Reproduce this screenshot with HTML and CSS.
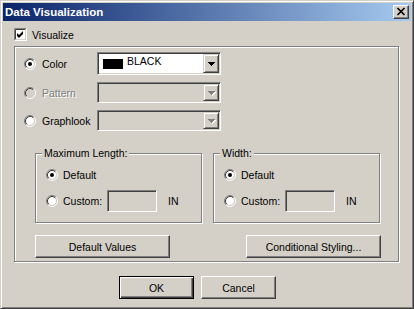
FILE: index.html
```html
<!DOCTYPE html>
<html lang="en">
<head>
    <meta charset="UTF-8">
    <title>Data Visualization</title>
    <link rel="stylesheet" href="styles.css">
</head>
<body>
    <!-- shared shapes -->
    <svg class="defs" width="0" height="0">
        <symbol id="radio-ring" viewBox="0 0 12 12">
            <path d="M2.11 9.89A5.5 5.5 0 0 1 9.89 2.11" fill="none" stroke="#808080"/>
            <path d="M9.89 2.11A5.5 5.5 0 0 1 2.11 9.89" fill="none" stroke="#fff"/>
            <path d="M2.82 9.18A4.5 4.5 0 0 1 9.18 2.82" fill="none" stroke="#404040"/>
            <path d="M9.18 2.82A4.5 4.5 0 0 1 2.82 9.18" fill="none" stroke="#d4d0c8"/>
        </symbol>
        <symbol id="arrow" viewBox="0 0 7 4">
            <path d="M0 0h7v1H0zM1 1h5v1H1zM2 2h3v1H2zM3 3h1v1H3z"/>
        </symbol>
    </svg>

    <div class="dialog">
        <div class="titlebar">
            <span class="title">Data Visualization</span>
            <span class="close-btn">
                <svg width="10" height="9" viewBox="0 0 10 9">
                    <path d="M1.5 1L8.5 8M8.5 1L1.5 8" stroke="#000" stroke-width="1.7"/>
                </svg>
            </span>
        </div>

        <div class="content">
            <div class="check-row">
                <svg class="checkbox" width="13" height="13" viewBox="0 0 13 13">
                    <rect width="13" height="13" fill="#fff"/>
                    <path d="M0.5 12.5V0.5H12.5" fill="none" stroke="#808080"/>
                    <path d="M1.5 11.5V1.5H11.5" fill="none" stroke="#404040"/>
                    <path d="M0.5 12.5H12.5V0.5" fill="none" stroke="#fff"/>
                    <path d="M1.5 11.5H11.5V1.5" fill="none" stroke="#d4d0c8"/>
                    <path d="M3 5L5 7L9 3V6L5 10L3 8Z" fill="#000"/>
                </svg>
                <span>Visualize</span>
            </div>

            <div class="group main-group">
                <div class="opt-row color-row">
                    <span class="radio-label">
                        <svg class="radio" width="12" height="12" viewBox="0 0 12 12">
                            <circle cx="6" cy="6" r="4" fill="#fff"/>
                            <use href="#radio-ring"/>
                            <circle cx="6" cy="6" r="2" fill="#000"/>
                        </svg>
                        Color
                    </span>
                    <div class="combo">
                        <span class="combo-value"><span class="swatch"></span><span class="value-text">BLACK</span></span>
                        <span class="combo-btn"><svg width="7" height="4"><use href="#arrow"/></svg></span>
                    </div>
                </div>

                <div class="opt-row">
                    <span class="radio-label disabled">
                        <svg class="radio" width="12" height="12" viewBox="0 0 12 12">
                            <circle cx="6" cy="6" r="4" fill="#d4d0c8"/>
                            <use href="#radio-ring"/>
                        </svg>
                        Pattern
                    </span>
                    <div class="combo combo-disabled">
                        <span class="combo-value"></span>
                        <span class="combo-btn"><svg class="arrow-off" width="8" height="5" viewBox="0 0 8 5"><use href="#arrow" x="1" y="1" width="7" height="4" fill="#fff"/><use href="#arrow" width="7" height="4" fill="#808080"/></svg></span>
                    </div>
                </div>

                <div class="opt-row">
                    <span class="radio-label">
                        <svg class="radio" width="12" height="12" viewBox="0 0 12 12">
                            <circle cx="6" cy="6" r="4" fill="#fff"/>
                            <use href="#radio-ring"/>
                        </svg>
                        Graphlook
                    </span>
                    <div class="combo combo-disabled">
                        <span class="combo-value"></span>
                        <span class="combo-btn"><svg class="arrow-off" width="8" height="5" viewBox="0 0 8 5"><use href="#arrow" x="1" y="1" width="7" height="4" fill="#fff"/><use href="#arrow" width="7" height="4" fill="#808080"/></svg></span>
                    </div>
                </div>

                <div class="sub-groups">
                    <div class="group sub-group">
                        <span class="legend">Maximum Length:</span>
                        <div class="sub-row">
                            <svg class="radio" width="12" height="12" viewBox="0 0 12 12">
                                <circle cx="6" cy="6" r="4" fill="#fff"/>
                                <use href="#radio-ring"/>
                                <circle cx="6" cy="6" r="2" fill="#000"/>
                            </svg>
                            <span class="sub-label">Default</span>
                        </div>
                        <div class="sub-row">
                            <svg class="radio" width="12" height="12" viewBox="0 0 12 12">
                                <circle cx="6" cy="6" r="4" fill="#fff"/>
                                <use href="#radio-ring"/>
                            </svg>
                            <span class="sub-label">Custom:</span>
                            <span class="field"></span>
                            <span class="unit">IN</span>
                        </div>
                    </div>

                    <div class="group sub-group">
                        <span class="legend">Width:</span>
                        <div class="sub-row">
                            <svg class="radio" width="12" height="12" viewBox="0 0 12 12">
                                <circle cx="6" cy="6" r="4" fill="#fff"/>
                                <use href="#radio-ring"/>
                                <circle cx="6" cy="6" r="2" fill="#000"/>
                            </svg>
                            <span class="sub-label">Default</span>
                        </div>
                        <div class="sub-row">
                            <svg class="radio" width="12" height="12" viewBox="0 0 12 12">
                                <circle cx="6" cy="6" r="4" fill="#fff"/>
                                <use href="#radio-ring"/>
                            </svg>
                            <span class="sub-label">Custom:</span>
                            <span class="field"></span>
                            <span class="unit">IN</span>
                        </div>
                    </div>
                </div>

                <div class="action-row">
                    <button class="btn wide-btn">Default Values</button>
                    <button class="btn wide-btn">Conditional Styling...</button>
                </div>
            </div>

            <div class="footer-row">
                <button class="btn dialog-btn default-btn">OK</button>
                <button class="btn dialog-btn">Cancel</button>
            </div>
        </div>
    </div>
</body>
</html>
```

FILE: styles.css
```css
body {
    margin: 0;
    background-color: #d4d0c8;
    font-family: "Liberation Sans", Arial, sans-serif;
    font-size: 10.5px;
    color: #000;
}

.defs {
    position: absolute;
    width: 0;
    height: 0;
}

.dialog {
    width: 414px;
    height: 309px;
    box-sizing: border-box;
    border: 1px solid;
    border-color: #d4d0c8 #404040 #404040 #d4d0c8;
    box-shadow: inset 1px 1px #fff, inset -1px -1px #808080;
    padding: 2px;
}

/* Title bar */
.titlebar {
    height: 18px;
    display: flex;
    align-items: center;
    justify-content: space-between;
    padding: 0 2px 0 2px;
    background: linear-gradient(to right, #0a246a, #a6caf0);
}

.title {
    color: #fff;
    font-weight: bold;
    font-size: 11.5px;
}

.close-btn {
    width: 16px;
    height: 14px;
    box-sizing: border-box;
    border: 1px solid;
    border-color: #fff #404040 #404040 #fff;
    box-shadow: inset -1px -1px #808080;
    background-color: #d4d0c8;
    display: flex;
    align-items: center;
    justify-content: center;
}

.close-btn svg {
    display: block;
    margin: 0 1px 1px 0;
}

.content {
    padding: 0 11px;
}

.check-row {
    display: flex;
    align-items: center;
    gap: 5px;
    height: 13px;
    margin-top: 7px;
}

.checkbox, .radio {
    display: block;
    flex: none;
}

/* Etched group boxes */
.group {
    border: 1px solid #808080;
    box-shadow: inset 1px 1px #fff, 1px 1px #fff;
}

.main-group {
    width: 385px;
    height: 216px;
    box-sizing: border-box;
    margin-top: 5px;
    padding-top: 5px;
}

.opt-row {
    display: flex;
    align-items: center;
    height: 21px;
    padding-left: 9px;
    margin-top: 7px;
}

.opt-row.color-row {
    height: 23px;
    margin-top: 0;
}

.radio-label {
    width: 73px;
    display: flex;
    align-items: center;
    gap: 6px;
}

.disabled {
    color: #808080;
    text-shadow: 1px 1px #fff;
}

/* Combo boxes */
.combo {
    width: 124px;
    height: 100%;
    box-sizing: border-box;
    border: 1px solid;
    border-color: #808080 #fff #fff #808080;
    box-shadow: inset 1px 1px #404040, inset -1px -1px #d4d0c8;
    background-color: #fff;
    padding: 1px;
    display: flex;
}

.combo-disabled {
    background-color: #d4d0c8;
}

.combo-value {
    flex: 1;
    display: flex;
    gap: 4px;
    padding-left: 4px;
}

.swatch {
    width: 20px;
    height: 10px;
    margin-top: 5px;
    background-color: #000;
}

.value-text {
    line-height: 13px;
    margin-top: 1px;
}

.combo-btn {
    width: 16px;
    box-sizing: border-box;
    border: 1px solid;
    border-color: #d4d0c8 #404040 #404040 #d4d0c8;
    box-shadow: inset 1px 1px #fff, inset -1px -1px #808080;
    background-color: #d4d0c8;
    display: flex;
    align-items: center;
    justify-content: center;
}

.combo-btn svg {
    display: block;
}

.arrow-off {
    margin: 1px 0 0 1px;
}

/* Length / width boxes */
.sub-groups {
    display: flex;
    gap: 11px;
    margin: 22px 0 0 20px;
}

.sub-group {
    position: relative;
    width: 167px;
    height: 70px;
    box-sizing: border-box;
    padding: 10px 0 0 10px;
}

.legend {
    position: absolute;
    top: -7px;
    left: 6px;
    padding: 0 2px;
    line-height: 13px;
    background-color: #d4d0c8;
}

.sub-row {
    display: flex;
    align-items: center;
    height: 22px;
}

.sub-row + .sub-row {
    margin-top: 4px;
}

.sub-label {
    width: 44px;
    margin-left: 5px;
}

.field {
    width: 50px;
    height: 22px;
    box-sizing: border-box;
    border: 1px solid;
    border-color: #808080 #fff #fff #808080;
    box-shadow: inset 1px 1px #404040, inset -1px -1px #d4d0c8;
}

.unit {
    margin-left: 11px;
}

/* Buttons */
.btn {
    font: inherit;
    color: #000;
    height: 23px;
    padding: 0;
    box-sizing: border-box;
    background-color: #d4d0c8;
    border: 1px solid;
    border-color: #fff #404040 #404040 #fff;
    box-shadow: inset -1px -1px #808080;
}

.action-row {
    display: flex;
    justify-content: space-between;
    width: 346px;
    margin: 12px 0 0 20px;
}

.wide-btn {
    width: 135px;
}

.footer-row {
    display: flex;
    gap: 7px;
    margin-top: 14px;
    padding-left: 105px;
}

.dialog-btn {
    width: 75px;
}

.default-btn {
    border: 1px solid #000;
    box-shadow: inset 1px 1px #fff, inset -1px -1px #404040, inset -2px -2px #808080;
}
```
